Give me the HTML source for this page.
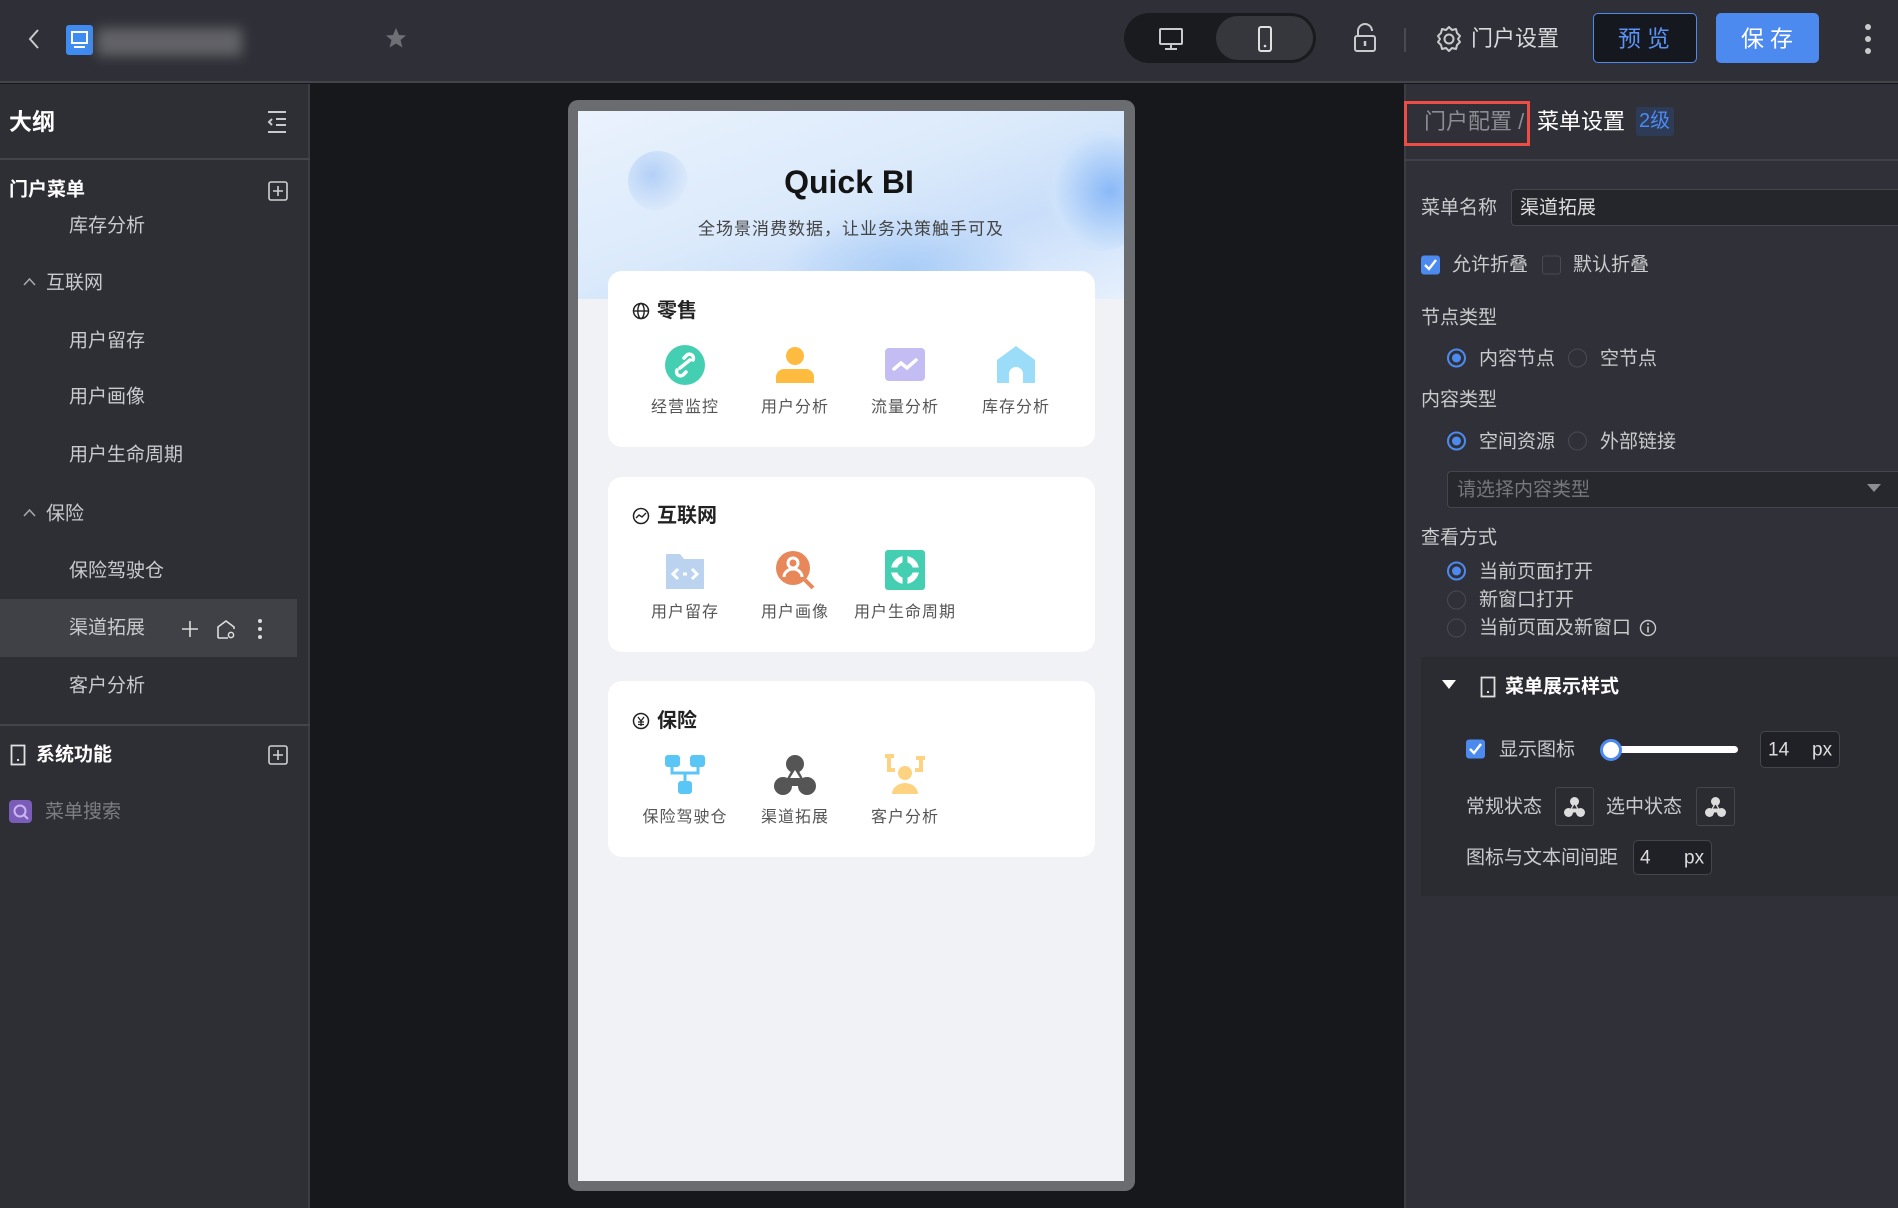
<!DOCTYPE html>
<html><head><meta charset="utf-8"><style>
*{box-sizing:border-box;margin:0;padding:0}
body{width:1898px;height:1208px;background:#17181b;font-family:"Liberation Sans","Noto Sans CJK SC",sans-serif;position:relative;overflow:hidden;color:#d8d9dc}
.a{position:absolute}
.t{position:absolute;white-space:nowrap;line-height:1;transform:translateY(-50%)}
.top{left:0;top:0;width:1898px;height:83px;background:#2f3037;border-bottom:2px solid #44454b}
.side{left:0;top:84px;width:310px;height:1124px;background:#2e2f35;border-right:2px solid #3c3d43}
.right{left:1404px;top:84px;width:494px;height:1124px;background:#303138;border-left:2px solid #3c3d43}
.si{font-size:19px;color:#c9cacd}
.rl{font-size:19px;color:#c9cacd}
.radio{position:absolute;width:19px;height:19px;border-radius:50%;border:1.5px solid #4a4b52;transform:translateY(-50%)}
.radio.on{border:2px solid #4d8af0}
.radio.on::after{content:"";position:absolute;left:3px;top:3px;width:9px;height:9px;border-radius:50%;background:#4d8af0}
.cb{position:absolute;width:19px;height:19px;border-radius:3px;transform:translateY(-50%)}
.card{position:absolute;left:608px;width:487px;background:#fff;border-radius:14px}
.ct{position:absolute;font-size:20px;font-weight:bold;color:#222;line-height:1;transform:translateY(-50%)}
.lbl{position:absolute;font-size:16px;color:#555;line-height:1;transform:translate(-50%,-50%);white-space:nowrap;letter-spacing:1px}
.ic{position:absolute;width:44px;height:44px;transform:translate(-50%,-50%)}
</style></head><body>
<div class="a top"></div>
<svg class="a" style="left:26px;top:28px" width="16" height="22"><path d="M12 2 L4 11 L12 20" stroke="#c9cacd" stroke-width="2" fill="none"/></svg>
<div class="a" style="left:66px;top:25px;width:27px;height:30px;background:#3e8bf2;border-radius:3px"></div>
<svg class="a" style="left:70px;top:30px" width="19" height="20"><rect x="2" y="2" width="15" height="11" fill="none" stroke="#fff" stroke-width="2"/><rect x="4" y="16" width="11" height="2" fill="#fff"/></svg>
<div class="a" style="left:97px;top:28px;width:145px;height:28px;background:#6e6f74;filter:blur(6px);opacity:.8"></div>
<svg class="a" style="left:385px;top:27px" width="22" height="22"><path d="M11 1 L14 8 L21 8.5 L15.5 13 L17.5 20.5 L11 16.5 L4.5 20.5 L6.5 13 L1 8.5 L8 8Z" fill="#6f7075"/></svg>
<div class="a" style="left:1124px;top:13px;width:192px;height:50px;background:#1a1b1e;border-radius:25px"></div>
<div class="a" style="left:1216px;top:16px;width:97px;height:44px;background:#36373d;border-radius:22px"></div>
<svg class="a" style="left:1158px;top:27px" width="26" height="24"><rect x="2" y="2" width="22" height="15" rx="1" fill="none" stroke="#c9cacd" stroke-width="2"/><path d="M13 17v4M7 22h12" stroke="#c9cacd" stroke-width="2"/></svg>
<svg class="a" style="left:1257px;top:25px" width="16" height="28"><rect x="2" y="2" width="12" height="24" rx="2" fill="none" stroke="#e0e0e0" stroke-width="2"/><circle cx="8" cy="21" r="1.3" fill="#e0e0e0"/></svg>
<svg class="a" style="left:1352px;top:23px" width="26" height="30"><path d="M6 13V8a7 7 0 0 1 14 0" stroke="#c9cacd" stroke-width="2" fill="none"/><rect x="3" y="13" width="20" height="15" rx="2" fill="none" stroke="#c9cacd" stroke-width="2"/><path d="M13 18v5" stroke="#c9cacd" stroke-width="2.5"/></svg>
<div class="a" style="left:1404px;top:28px;width:2px;height:24px;background:#4a4b50"></div>
<svg class="a" style="left:1435px;top:25px" width="28" height="28"><circle cx="14" cy="14" r="4.5" fill="none" stroke="#c9cacd" stroke-width="2"/><path d="M14 2l3 3 4-1 1 4 3 3-2 3 2 3-3 3-1 4-4-1-3 3-3-3-4 1-1-4-3-3 2-3-2-3 3-3 1-4 4 1z" fill="none" stroke="#c9cacd" stroke-width="2" stroke-linejoin="round"/></svg>
<div class="t" style="left:1471px;top:39px;font-size:22px;color:#d8d9dc">门户设置</div>
<div class="a" style="left:1593px;top:13px;width:104px;height:50px;border:1.5px solid #4d8af0;border-radius:5px;background:#16181f"></div>
<div class="t" style="left:1618px;top:39px;font-size:23px;color:#5b93f5;letter-spacing:6px">预览</div>
<div class="a" style="left:1716px;top:13px;width:103px;height:50px;border-radius:5px;background:#4d8af0"></div>
<div class="t" style="left:1741px;top:39px;font-size:23px;color:#fff;letter-spacing:6px">保存</div>
<div class="a" style="left:1865px;top:24px;width:6px;height:6px;border-radius:3px;background:#c9cacd"></div>
<div class="a" style="left:1865px;top:36px;width:6px;height:6px;border-radius:3px;background:#c9cacd"></div>
<div class="a" style="left:1865px;top:48px;width:6px;height:6px;border-radius:3px;background:#c9cacd"></div>

<div class="a side"></div>
<div class="t" style="left:9px;top:122px;font-size:23px;font-weight:bold;color:#fff">大纲</div>
<svg class="a" style="left:266px;top:110px" width="22" height="24"><path d="M2 2h18M10 9h10M10 15h10M2 22h18M6 9l-3 3 3 3" stroke="#c9cacd" stroke-width="2" fill="none"/></svg>
<div class="a" style="left:0;top:158px;width:310px;height:2px;background:#44454b"></div>
<div class="t" style="left:9px;top:190px;font-size:19px;font-weight:bold;color:#fff">门户菜单</div>
<svg class="a" style="left:268px;top:181px" width="20" height="20"><rect x="1" y="1" width="18" height="18" rx="2" fill="none" stroke="#d0d0d0" stroke-width="1.6"/><path d="M10 5v10M5 10h10" stroke="#d0d0d0" stroke-width="1.6"/></svg>
<div class="t si" style="left:69px;top:226px">库存分析</div>
<svg class="a" style="left:23px;top:277px" width="13" height="9"><path d="M1 8l5.5-6 5.5 6" stroke="#aaa" stroke-width="1.5" fill="none"/></svg>
<div class="t si" style="left:46px;top:283px">互联网</div>
<div class="t si" style="left:69px;top:341px">用户留存</div>
<div class="t si" style="left:69px;top:397px">用户画像</div>
<div class="t si" style="left:69px;top:455px">用户生命周期</div>
<svg class="a" style="left:23px;top:508px" width="13" height="9"><path d="M1 8l5.5-6 5.5 6" stroke="#aaa" stroke-width="1.5" fill="none"/></svg>
<div class="t si" style="left:46px;top:514px">保险</div>
<div class="t si" style="left:69px;top:571px">保险驾驶仓</div>
<div class="a" style="left:0;top:599px;width:297px;height:58px;background:#404147"></div>
<div class="t si" style="left:69px;top:628px">渠道拓展</div>
<svg class="a" style="left:180px;top:619px" width="20" height="20"><path d="M10 2v16M2 10h16" stroke="#ddd" stroke-width="1.6"/></svg>
<svg class="a" style="left:215px;top:618px" width="22" height="22"><path d="M3 20V9l8-6 8 6v2M3 20h10" stroke="#ddd" stroke-width="1.6" fill="none"/><circle cx="16" cy="17" r="2.6" fill="none" stroke="#ddd" stroke-width="1.5"/></svg>
<div class="a" style="left:258px;top:619px;width:4px;height:4px;border-radius:2px;background:#ddd"></div>
<div class="a" style="left:258px;top:627px;width:4px;height:4px;border-radius:2px;background:#ddd"></div>
<div class="a" style="left:258px;top:635px;width:4px;height:4px;border-radius:2px;background:#ddd"></div>
<div class="t si" style="left:69px;top:686px">客户分析</div>
<div class="a" style="left:0;top:724px;width:310px;height:2px;background:#44454b"></div>
<svg class="a" style="left:10px;top:744px" width="16" height="22"><rect x="1.5" y="1.5" width="13" height="19" fill="none" stroke="#e0e0e0" stroke-width="1.8"/><rect x="7" y="15" width="2" height="2" fill="#e0e0e0"/></svg>
<div class="t" style="left:36px;top:755px;font-size:19px;font-weight:bold;color:#fff">系统功能</div>
<svg class="a" style="left:268px;top:745px" width="20" height="20"><rect x="1" y="1" width="18" height="18" rx="2" fill="none" stroke="#d0d0d0" stroke-width="1.6"/><path d="M10 5v10M5 10h10" stroke="#d0d0d0" stroke-width="1.6"/></svg>
<div class="a" style="left:9px;top:800px;width:23px;height:23px;border-radius:4px;background:#7b5cb8"></div>
<svg class="a" style="left:12px;top:803px" width="18" height="18"><circle cx="8" cy="8" r="5.5" fill="none" stroke="#c9b8f0" stroke-width="2"/><path d="M12 12l4 4" stroke="#c9b8f0" stroke-width="2"/></svg>
<div class="t" style="left:45px;top:812px;font-size:19px;color:#7d7e83">菜单搜索</div>

<!-- phone -->
<div class="a" style="left:568px;top:100px;width:567px;height:1091px;background:#6b6c70;border-radius:10px"></div>
<div class="a" style="left:578px;top:111px;width:546px;height:1070px;background:#f0f2f6;overflow:hidden">
 <div class="a" style="left:0;top:0;width:546px;height:188px;background:linear-gradient(160deg,#eaf2fd 0%,#dbeafb 45%,#c9defa 70%,#e6f0fd 100%)"></div>
 <div class="a" style="left:50px;top:40px;width:60px;height:60px;border-radius:50%;background:radial-gradient(circle at 40% 40%,#b3d0f7,#dbe9fb 70%,transparent 72%)"></div>
 <div class="a" style="left:460px;top:20px;width:120px;height:120px;border-radius:50%;background:radial-gradient(circle at 60% 50%,#8ab9f7,#cfe3fb 60%,transparent 70%)"></div>
 <div class="a" style="left:200px;top:100px;width:260px;height:120px;border-radius:50%;background:radial-gradient(ellipse,#a9cdf6,transparent 70%)"></div>
</div>
<div class="t" style="left:849px;top:182px;transform:translate(-50%,-50%);font-size:32px;font-weight:bold;color:#141414">Quick BI</div>
<div class="t" style="left:851px;top:229px;transform:translate(-50%,-50%);font-size:17px;color:#444;letter-spacing:1px">全场景消费数据，让业务决策触手可及</div>

<div class="card" style="top:271px;height:176px"></div>
<div class="card" style="top:477px;height:175px"></div>
<div class="card" style="top:681px;height:176px"></div>

<svg class="a" style="left:632px;top:302px" width="18" height="18"><circle cx="9" cy="9" r="7.5" fill="none" stroke="#222" stroke-width="1.5"/><ellipse cx="9" cy="9" rx="3.2" ry="7.5" fill="none" stroke="#222" stroke-width="1.4"/><path d="M1.5 9h15" stroke="#222" stroke-width="1.4"/></svg>
<div class="ct" style="left:657px;top:311px">零售</div>
<svg class="a" style="left:632px;top:507px" width="18" height="18"><circle cx="9" cy="9" r="7.5" fill="none" stroke="#222" stroke-width="1.5"/><path d="M4 11l3-3 3 2 4-4" fill="none" stroke="#222" stroke-width="1.4"/></svg>
<div class="ct" style="left:657px;top:516px">互联网</div>
<svg class="a" style="left:632px;top:712px" width="18" height="18"><circle cx="9" cy="9" r="7.5" fill="none" stroke="#222" stroke-width="1.5"/><path d="M6 5l3 4 3-4M9 9v5M6 10h6M6 12.5h6" fill="none" stroke="#222" stroke-width="1.3"/></svg>
<div class="ct" style="left:657px;top:721px">保险</div>

<!-- row1 icons -->
<svg class="ic" style="left:685px;top:365px" viewBox="0 0 44 44"><circle cx="22" cy="22" r="20" fill="#45cfb2"/><path d="M17 25l10-8M14 27a4 4 0 0 0 6 5l3-3M30 17a4 4 0 0 0-6-5l-3 3" stroke="#fff" stroke-width="3.5" fill="none" stroke-linecap="round"/></svg>
<svg class="ic" style="left:795px;top:365px" viewBox="0 0 44 44"><circle cx="22" cy="13" r="9" fill="#fdbb3f"/><path d="M3 40v-6a8 8 0 0 1 8-8h22a8 8 0 0 1 8 8v6z" fill="#fdbb3f"/></svg>
<svg class="ic" style="left:905px;top:365px" viewBox="0 0 44 44"><rect x="2" y="5" width="40" height="33" rx="4" fill="#c3bdf4"/><path d="M11 26l7-6 6 5 9-8" stroke="#fff" stroke-width="3.5" fill="none" stroke-linecap="round"/></svg>
<svg class="ic" style="left:1016px;top:365px" viewBox="0 0 44 44"><path d="M3 17L22 3l19 14v23H29V31a7 7 0 0 0-14 0v9H3z" fill="#9bdcf8"/></svg>
<div class="lbl" style="left:685px;top:408px">经营监控</div>
<div class="lbl" style="left:795px;top:408px">用户分析</div>
<div class="lbl" style="left:905px;top:408px">流量分析</div>
<div class="lbl" style="left:1016px;top:408px">库存分析</div>
<!-- row2 -->
<svg class="ic" style="left:685px;top:570px" viewBox="0 0 44 44"><path d="M3 6h14l4 5h20v30H3z" fill="#bcd3f0"/><path d="M15 21l-5 5 5 5M29 21l5 5-5 5M20 26h4" stroke="#fff" stroke-width="3" fill="none"/></svg>
<svg class="ic" style="left:795px;top:570px" viewBox="0 0 44 44"><circle cx="20" cy="20" r="17" fill="#e8875a"/><circle cx="20" cy="15" r="5" fill="none" stroke="#fff" stroke-width="3"/><path d="M11 29a9 8 0 0 1 18 0" stroke="#fff" stroke-width="3" fill="none"/><path d="M32 32l8 8" stroke="#e8875a" stroke-width="4"/></svg>
<svg class="ic" style="left:905px;top:570px" viewBox="0 0 44 44"><rect x="2" y="2" width="40" height="40" rx="3" fill="#45cfb2"/><circle cx="22" cy="22" r="11" fill="none" stroke="#fff" stroke-width="6"/><path d="M22 8v28M8 22h28" stroke="#45cfb2" stroke-width="5"/></svg>
<div class="lbl" style="left:685px;top:613px">用户留存</div>
<div class="lbl" style="left:795px;top:613px">用户画像</div>
<div class="lbl" style="left:905px;top:613px">用户生命周期</div>
<!-- row3 -->
<svg class="ic" style="left:685px;top:775px" viewBox="0 0 44 44"><rect x="2" y="2" width="15" height="12" rx="3" fill="#5ac6f5"/><rect x="27" y="2" width="15" height="12" rx="3" fill="#5ac6f5"/><rect x="15" y="28" width="14" height="13" rx="3" fill="#5ac6f5"/><path d="M9 14v6h26v-6M22 20v8" stroke="#5ac6f5" stroke-width="3" fill="none"/></svg>
<svg class="ic" style="left:795px;top:775px" viewBox="0 0 44 44"><circle cx="22" cy="11" r="9" fill="#555"/><circle cx="10" cy="33" r="9" fill="#555"/><circle cx="34" cy="33" r="9" fill="#555"/><path d="M22 11L10 33h24z" fill="#555"/><path d="M17 25h10l-5-8z" fill="#fff"/></svg>
<svg class="ic" style="left:905px;top:775px" viewBox="0 0 44 44"><circle cx="22" cy="20" r="7" fill="#fdd382"/><path d="M9 41a13 11 0 0 1 26 0z" fill="#fdd382"/><path d="M2 3h9M6 3v14h6M33 5h9M38 5v12h-6" stroke="#fdd382" stroke-width="4" fill="none"/></svg>
<div class="lbl" style="left:685px;top:818px">保险驾驶仓</div>
<div class="lbl" style="left:795px;top:818px">渠道拓展</div>
<div class="lbl" style="left:905px;top:818px">客户分析</div>

<!-- right panel -->
<div class="a right"></div>
<div class="t" style="left:1424px;top:122px;font-size:22px;color:#8c8d92">门户配置 /</div>
<div class="a" style="left:1404px;top:101px;width:126px;height:45px;border:3px solid #ee4d45"></div>
<div class="t" style="left:1537px;top:122px;font-size:22px;color:#fff">菜单设置</div>
<div class="a" style="left:1636px;top:107px;width:38px;height:29px;background:#2d3b57;border-radius:3px"></div>
<div class="t" style="left:1639px;top:121px;font-size:20px;color:#4d8af0">2级</div>
<div class="a" style="left:1404px;top:159px;width:494px;height:2px;background:#40414a"></div>
<div class="t rl" style="left:1421px;top:208px">菜单名称</div>
<div class="a" style="left:1511px;top:189px;width:400px;height:37px;border:1.5px solid #45464c;border-radius:4px;background:#25262b"></div>
<div class="t rl" style="left:1520px;top:208px;color:#ddd">渠道拓展</div>
<div class="cb" style="left:1421px;top:265px;background:#4d8af0"></div>
<svg class="a" style="left:1423px;top:257px" width="15" height="15"><path d="M2 8l4 4 7-9" stroke="#fff" stroke-width="2.4" fill="none"/></svg>
<div class="t rl" style="left:1452px;top:265px">允许折叠</div>
<div class="cb" style="left:1542px;top:265px;border:1.5px solid #4a4b52"></div>
<div class="t rl" style="left:1573px;top:265px">默认折叠</div>
<div class="t rl" style="left:1421px;top:318px">节点类型</div>
<div class="radio on" style="left:1447px;top:358px"></div>
<div class="t rl" style="left:1479px;top:359px">内容节点</div>
<div class="radio" style="left:1568px;top:358px"></div>
<div class="t rl" style="left:1600px;top:359px">空节点</div>
<div class="t rl" style="left:1421px;top:400px">内容类型</div>
<div class="radio on" style="left:1447px;top:441px"></div>
<div class="t rl" style="left:1479px;top:442px">空间资源</div>
<div class="radio" style="left:1568px;top:441px"></div>
<div class="t rl" style="left:1600px;top:442px">外部链接</div>
<div class="a" style="left:1447px;top:471px;width:460px;height:37px;border:1.5px solid #45464c;border-radius:4px;background:#27282d"></div>
<div class="t rl" style="left:1457px;top:490px;color:#76777c">请选择内容类型</div>
<svg class="a" style="left:1867px;top:484px" width="14" height="9"><path d="M0 0h14L7 8z" fill="#8c8d92"/></svg>
<div class="t rl" style="left:1421px;top:538px">查看方式</div>
<div class="radio on" style="left:1447px;top:571px"></div>
<div class="t rl" style="left:1479px;top:572px">当前页面打开</div>
<div class="radio" style="left:1447px;top:600px"></div>
<div class="t rl" style="left:1479px;top:600px">新窗口打开</div>
<div class="radio" style="left:1447px;top:628px"></div>
<div class="t rl" style="left:1479px;top:628px">当前页面及新窗口</div>
<svg class="a" style="left:1639px;top:619px" width="18" height="18"><circle cx="9" cy="9" r="7.5" fill="none" stroke="#c9cacd" stroke-width="1.4"/><path d="M9 7.5v6" stroke="#c9cacd" stroke-width="1.6"/><circle cx="9" cy="5" r="1" fill="#c9cacd"/></svg>
<div class="a" style="left:1421px;top:657px;width:477px;height:239px;background:#2b2c32"></div>
<svg class="a" style="left:1442px;top:680px" width="14" height="10"><path d="M0 0h14L7 9z" fill="#fff"/></svg>
<svg class="a" style="left:1480px;top:676px" width="16" height="22"><rect x="1.5" y="1.5" width="13" height="19" fill="none" stroke="#e0e0e0" stroke-width="1.8"/><rect x="7" y="15" width="2" height="2" fill="#e0e0e0"/></svg>
<div class="t" style="left:1505px;top:687px;font-size:19px;font-weight:bold;color:#fff">菜单展示样式</div>
<div class="cb" style="left:1466px;top:749px;background:#4d8af0"></div>
<svg class="a" style="left:1468px;top:741px" width="15" height="15"><path d="M2 8l4 4 7-9" stroke="#fff" stroke-width="2.4" fill="none"/></svg>
<div class="t rl" style="left:1499px;top:750px">显示图标</div>
<div class="a" style="left:1601px;top:746px;width:137px;height:7px;border-radius:4px;background:#fff"></div>
<div class="a" style="left:1600px;top:739px;width:22px;height:22px;border-radius:50%;background:#fff;border:3px solid #4d8af0"></div>
<div class="a" style="left:1760px;top:731px;width:80px;height:37px;border:1.5px solid #45464c;border-radius:5px;background:#202126"></div>
<div class="t" style="left:1768px;top:750px;font-size:19px;color:#ddd">14</div>
<div class="t" style="left:1812px;top:750px;font-size:19px;color:#ddd">px</div>
<div class="t rl" style="left:1466px;top:807px">常规状态</div>
<div class="a" style="left:1555px;top:787px;width:39px;height:39px;border:1.5px solid #45464c;border-radius:3px"></div>
<svg class="a" style="left:1562px;top:796px" width="25" height="22" viewBox="0 0 44 44"><circle cx="22" cy="11" r="9" fill="#ddd"/><circle cx="10" cy="33" r="9" fill="#ddd"/><circle cx="34" cy="33" r="9" fill="#ddd"/><path d="M22 11L10 33h24z" fill="#ddd"/><path d="M17 25h10l-5-8z" fill="#2b2c32"/></svg>
<div class="t rl" style="left:1606px;top:807px">选中状态</div>
<div class="a" style="left:1696px;top:787px;width:39px;height:39px;border:1.5px solid #45464c;border-radius:3px"></div>
<svg class="a" style="left:1703px;top:796px" width="25" height="22" viewBox="0 0 44 44"><circle cx="22" cy="11" r="9" fill="#ddd"/><circle cx="10" cy="33" r="9" fill="#ddd"/><circle cx="34" cy="33" r="9" fill="#ddd"/><path d="M22 11L10 33h24z" fill="#ddd"/><path d="M17 25h10l-5-8z" fill="#2b2c32"/></svg>
<div class="t rl" style="left:1466px;top:858px">图标与文本间间距</div>
<div class="a" style="left:1633px;top:840px;width:79px;height:35px;border:1.5px solid #45464c;border-radius:5px;background:#202126"></div>
<div class="t" style="left:1640px;top:858px;font-size:19px;color:#ddd">4</div>
<div class="t" style="left:1684px;top:858px;font-size:19px;color:#ddd">px</div>
</body></html>
